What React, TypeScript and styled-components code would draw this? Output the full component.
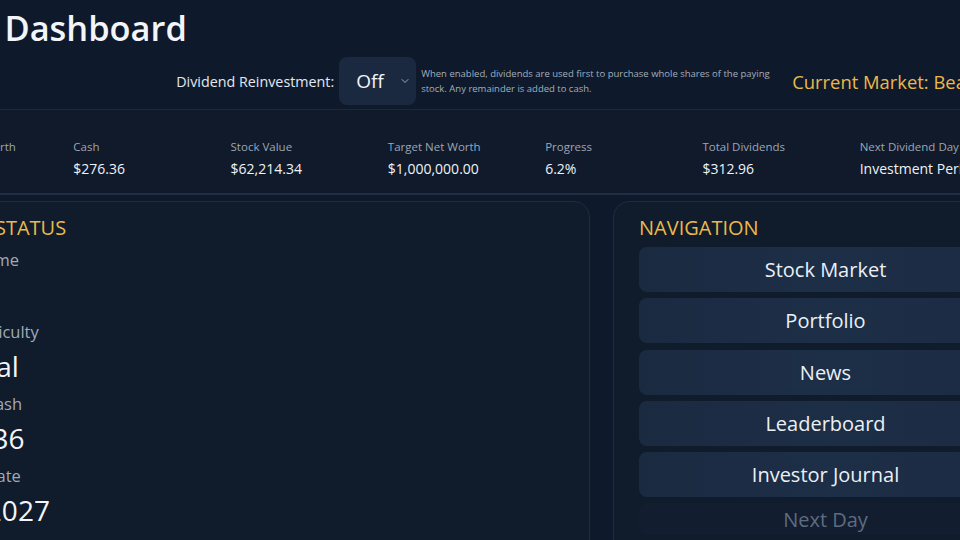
import React from 'react'
import styled, { createGlobalStyle } from 'styled-components'
import { ChevronDown } from 'lucide-react'

const GlobalStyle = createGlobalStyle`
    html, body {
        margin: 0;
        padding: 0;
        background: #0e1a2c;
        overflow: hidden;
    }
    body {
        font-family: "Open Sans", "Noto Sans", "Liberation Sans", sans-serif;
        color: #eef2f7;
    }
`

const Page = styled.div`
    width: 1145px;
    margin-left: -106px;
    height: 540px;
`

const Header = styled.header`
    display: flex;
    flex-direction: column;
`

const Title = styled.h1`
    margin: 7px 0 0 4px;
    font-size: 34.4px;
    line-height: 42px;
    font-weight: 600;
    color: #f2f5f9;
`

const ControlRow = styled.div`
    display: flex;
    justify-content: flex-end;
    align-items: center;
    gap: 20px;
    height: 60px;
    padding: 8px 0 4px;
    box-sizing: border-box;
`

const DividendGroup = styled.div`
    display: flex;
    align-items: center;
    gap: 5px;
`

const ControlLabel = styled.span`
    font-size: 14.3px;
    color: #e3e8ef;
`

const SelectBox = styled.div`
    display: flex;
    align-items: center;
    justify-content: space-between;
    width: 77px;
    height: 48px;
    box-sizing: border-box;
    padding: 0 5px 0 17px;
    border-radius: 8px;
    background: #1a2940;
    font-size: 19px;
    color: #f2f5f9;
    svg {
        color: #9aa6b8;
    }
`

const HelpText = styled.p`
    margin: 0;
    width: 351px;
    font-size: 9.5px;
    line-height: 15px;
    color: #a3adbb;
`

const MarketText = styled.span`
    font-size: 18.4px;
    font-weight: 500;
    color: #eab94a;
    white-space: nowrap;
`

const StatsBar = styled.section`
    display: grid;
    grid-template-columns: repeat(7, 1fr);
    padding: 29px 22px 14px;
    background: #101a2a;
    border-top: 1px solid #1b2940;
    border-bottom: 2px solid #1f2d45;
`

const Stat = styled.div`
    display: flex;
    flex-direction: column;
    gap: 4px;
    white-space: nowrap;
`

const StatLabel = styled.span`
    font-size: 11.5px;
    line-height: 16px;
    color: #9ba6b6;
`

const StatValue = styled.span`
    font-size: 14px;
    line-height: 20px;
    color: #eef2f7;
`

const Main = styled.main`
    display: grid;
    grid-template-columns: 696px 426px;
    gap: 23px;
    margin-top: 6px;
`

const Panel = styled.section`
    display: flex;
    flex-direction: column;
    height: 360px;
    padding: 13px 26px 0;
    border: 1px solid #1e2c43;
    border-radius: 16px;
    background: #101b2b;
`

const PanelTitle = styled.h2`
    margin: 0 0 0 -1px;
    font-size: 20px;
    line-height: 26px;
    font-weight: 500;
    color: #eab94a;
    white-space: nowrap;
`

const StatusList = styled.div`
    display: flex;
    flex-direction: column;
    gap: 10px;
    margin-top: 7.5px;
`

const StatusItem = styled.div`
    display: flex;
    flex-direction: column;
    gap: 6px;
    white-space: nowrap;
`

const StatusLabel = styled.span`
    font-size: 16.5px;
    line-height: 22px;
    color: #a0aab9;
`

const StatusValue = styled.span`
    font-size: 28px;
    line-height: 34px;
    color: #f2f5f9;
`

const NavList = styled.nav`
    display: flex;
    flex-direction: column;
    gap: 6.25px;
    margin: 6px 0 0 -1px;
`

const NavButton = styled.button<{ disabled?: boolean }>`
    height: ${({ disabled }) => (disabled ? '32px' : '45px')};
    border: none;
    border-radius: 8px;
    background: ${({ disabled }) =>
        disabled ? 'rgba(27, 42, 65, 0.18)' : 'linear-gradient(90deg, #1a2a41, #1d2e47 50%, #1b2b43)'};
    color: ${({ disabled }) => (disabled ? '#5d6c81' : '#ebf0f6')};
    font-family: inherit;
    font-size: 20px;
    font-weight: 500;
    cursor: ${({ disabled }) => (disabled ? 'default' : 'pointer')};
`

const stats = [
    { label: 'Current Net Worth', value: '$62,490.70' },
    { label: 'Cash', value: '$276.36' },
    { label: 'Stock Value', value: '$62,214.34' },
    { label: 'Target Net Worth', value: '$1,000,000.00' },
    { label: 'Progress', value: '6.2%' },
    { label: 'Total Dividends', value: '$312.96' },
    { label: 'Next Dividend Day', value: 'Investment Period' },
]

const status = [
    { label: 'Player Name', value: 'Alex' },
    { label: 'Game Difficulty', value: 'Normal' },
    { label: 'Current Cash', value: '$276.36' },
    { label: 'Current Date', value: 'June 2027' },
]

const navItems = ['Stock Market', 'Portfolio', 'News', 'Leaderboard', 'Investor Journal']

export default function App() {
    return (
        <>
            <GlobalStyle />
            <Page>
                <Header>
                    <Title>Game Dashboard</Title>
                    <ControlRow>
                        <DividendGroup>
                            <ControlLabel>Dividend Reinvestment:</ControlLabel>
                            <SelectBox>
                                Off
                                <ChevronDown size={12} strokeWidth={2} />
                            </SelectBox>
                            <HelpText>
                                When enabled, dividends are used first to purchase whole shares of the paying
                                stock. Any remainder is added to cash.
                            </HelpText>
                        </DividendGroup>
                        <MarketText>Current Market: Bear Market</MarketText>
                    </ControlRow>
                </Header>
                <StatsBar>
                    {stats.map(s => (
                        <Stat key={s.label}>
                            <StatLabel>{s.label}</StatLabel>
                            <StatValue>{s.value}</StatValue>
                        </Stat>
                    ))}
                </StatsBar>
                <Main>
                    <Panel>
                        <PanelTitle>PLAYER STATUS</PanelTitle>
                        <StatusList>
                            {status.map(s => (
                                <StatusItem key={s.label}>
                                    <StatusLabel>{s.label}</StatusLabel>
                                    <StatusValue>{s.value}</StatusValue>
                                </StatusItem>
                            ))}
                        </StatusList>
                    </Panel>
                    <Panel>
                        <PanelTitle>NAVIGATION</PanelTitle>
                        <NavList>
                            {navItems.map(n => (
                                <NavButton key={n}>{n}</NavButton>
                            ))}
                            <NavButton disabled>Next Day</NavButton>
                        </NavList>
                    </Panel>
                </Main>
            </Page>
        </>
    )
}
